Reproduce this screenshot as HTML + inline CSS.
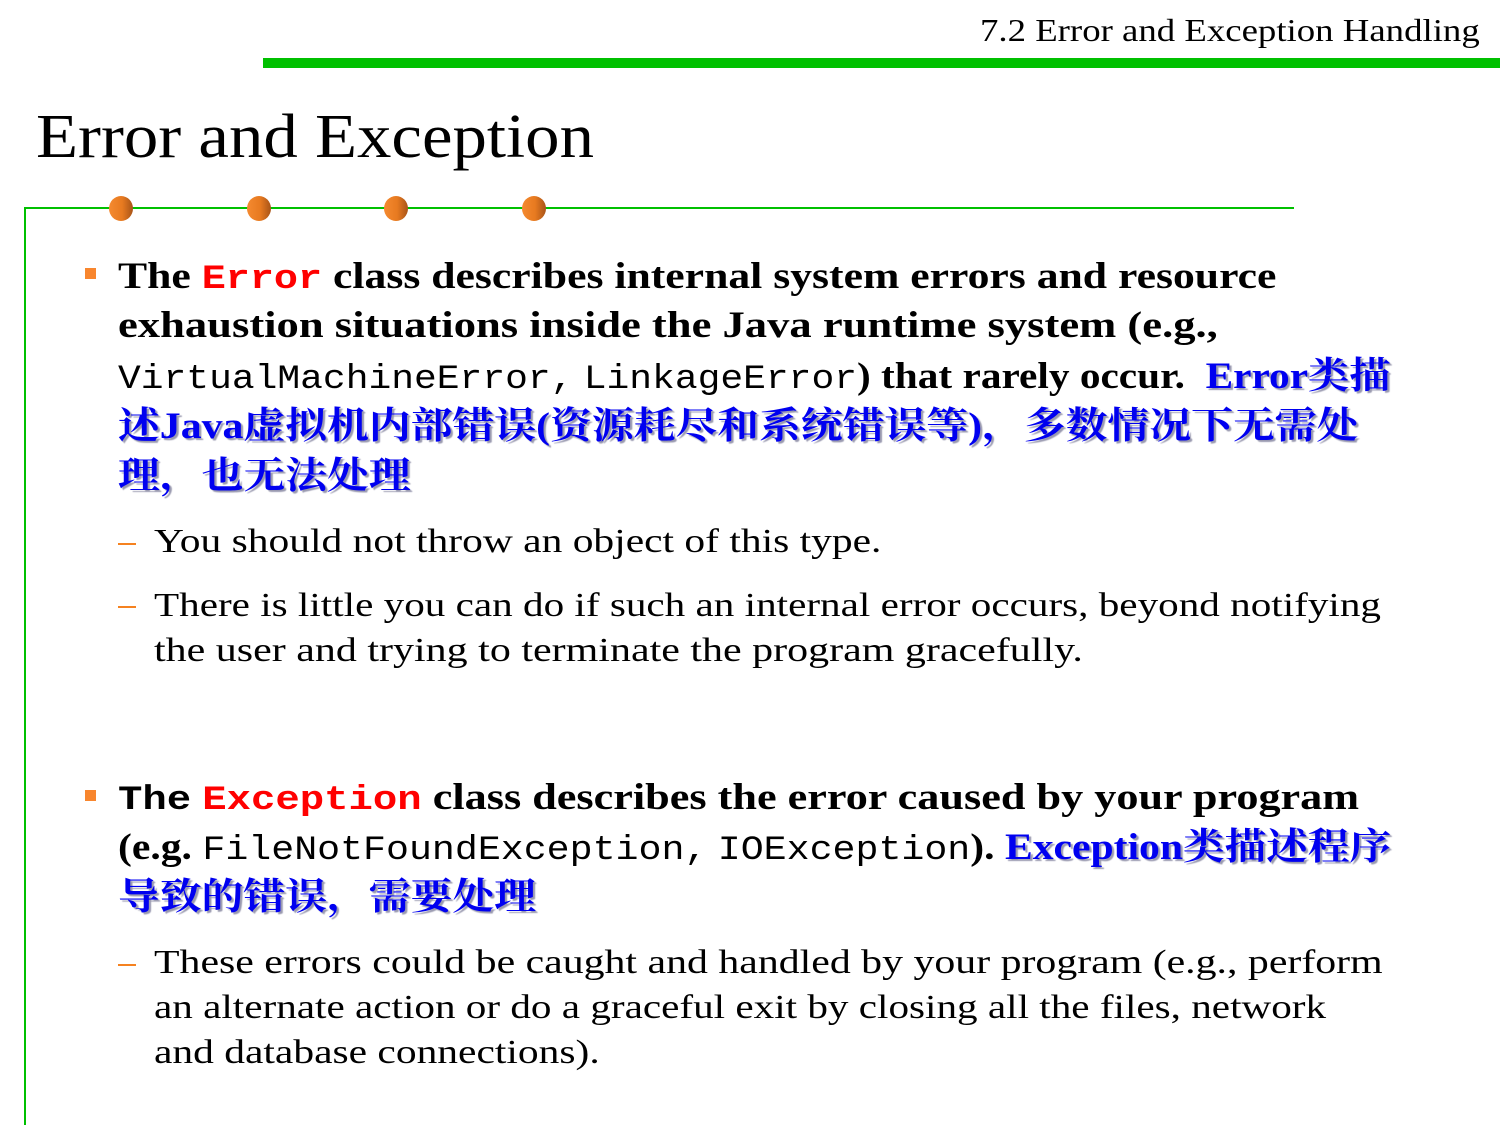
<!DOCTYPE html>
<html><head><meta charset="utf-8"><style>
body{margin:0;width:1500px;height:1125px;background:#fff;position:relative;overflow:hidden;font-family:"Liberation Serif","Noto Serif CJK SC",serif;}
.a{position:absolute;white-space:nowrap;transform-origin:0 50%;}
.b{font-weight:bold;font-size:37px;line-height:50px;left:118px;color:#000;}
.m{font-family:"Liberation Mono","Noto Sans CJK SC",monospace;font-weight:normal;font-size:34px;}
.mb{font-family:"Liberation Mono",monospace;font-weight:bold;font-size:34px;}
.r{color:#f00;}
.c{color:#0000f0;font-family:"Liberation Serif","Noto Serif CJK SC",serif;font-weight:bold;text-shadow:2px 2px 1px #9a9ab0;}
.s{font-size:34px;line-height:46px;left:154px;}
.d{position:absolute;left:118px;width:18px;height:2px;background:#f58220;}
.sq{position:absolute;left:85px;width:11px;height:11px;background:#f8862e;}
.dot{position:absolute;top:196px;width:24px;height:25px;border-radius:50%;background:linear-gradient(90deg,#f58a30,#e77a20 55%,#a85418);}
</style></head><body>
<div class="a" style="left:980px;top:10px;font-size:32px;line-height:40px;transform:scaleX(1.15)">7.2 Error and Exception Handling</div>
<div class="a" style="left:263px;top:58px;width:1237px;height:10px;background:#00c000;"></div>
<div class="a" style="left:36px;top:100px;font-size:62px;line-height:74px;transform:scaleX(1.11)">Error and Exception</div>
<div class="a" style="left:24px;top:207px;width:1270px;height:2px;background:#00c000;"></div>
<div class="a" style="left:24px;top:207px;width:2px;height:918px;background:#00c000;"></div>
<div class="dot" style="left:109px"></div><div class="dot" style="left:247px"></div><div class="dot" style="left:384px"></div><div class="dot" style="left:522px"></div>

<div class="sq" style="top:268px"></div>
<div class="a b" style="top:252px;transform:scaleX(1.18)">The <span class="mb r">Error</span> class describes internal system errors and resource</div>
<div class="a b" style="top:301px;transform:scaleX(1.205)">exhaustion situations inside the Java runtime system (e.g.,</div>
<div class="a b" style="top:352px;transform:scaleX(1.116)"><span class="m">VirtualMachineError,</span> <span class="m">LinkageError</span>) that rarely occur.&nbsp; <span class="c">Error类描</span></div>
<div class="a b c" style="top:402px;transform:scaleX(1.13)">述Java虚拟机内部错误(资源耗尽和系统错误等)，多数情况下无需处</div>
<div class="a b c" style="top:452px;transform:scaleX(1.13)">理，也无法处理</div>

<div class="d" style="top:543px"></div>
<div class="a s" style="top:519px;transform:scaleX(1.22)">You should not throw an object of this type.</div>
<div class="d" style="top:606px"></div>
<div class="a s" style="top:583px;transform:scaleX(1.21)">There is little you can do if such an internal error occurs, beyond notifying</div>
<div class="a s" style="top:628px;transform:scaleX(1.235)">the user and trying to terminate the program gracefully.</div>

<div class="sq" style="top:790px"></div>
<div class="a b" style="top:773px;transform:scaleX(1.195)"><span class="mb">The</span> <span class="mb r">Exception</span> class describes the error caused by your program</div>
<div class="a b" style="top:823px;transform:scaleX(1.125)">(e.g. <span class="m">FileNotFoundException,</span> <span class="m">IOException</span>). <span class="c">Exception类描述程序</span></div>
<div class="a b c" style="top:873px;transform:scaleX(1.13)">导致的错误，需要处理</div>

<div class="d" style="top:964px"></div>
<div class="a s" style="top:940px;transform:scaleX(1.23)">These errors could be caught and handled by your program (e.g., perform</div>
<div class="a s" style="top:985px;transform:scaleX(1.21)">an alternate action or do a graceful exit by closing all the files, network</div>
<div class="a s" style="top:1030px;transform:scaleX(1.22)">and database connections).</div>
</body></html>
